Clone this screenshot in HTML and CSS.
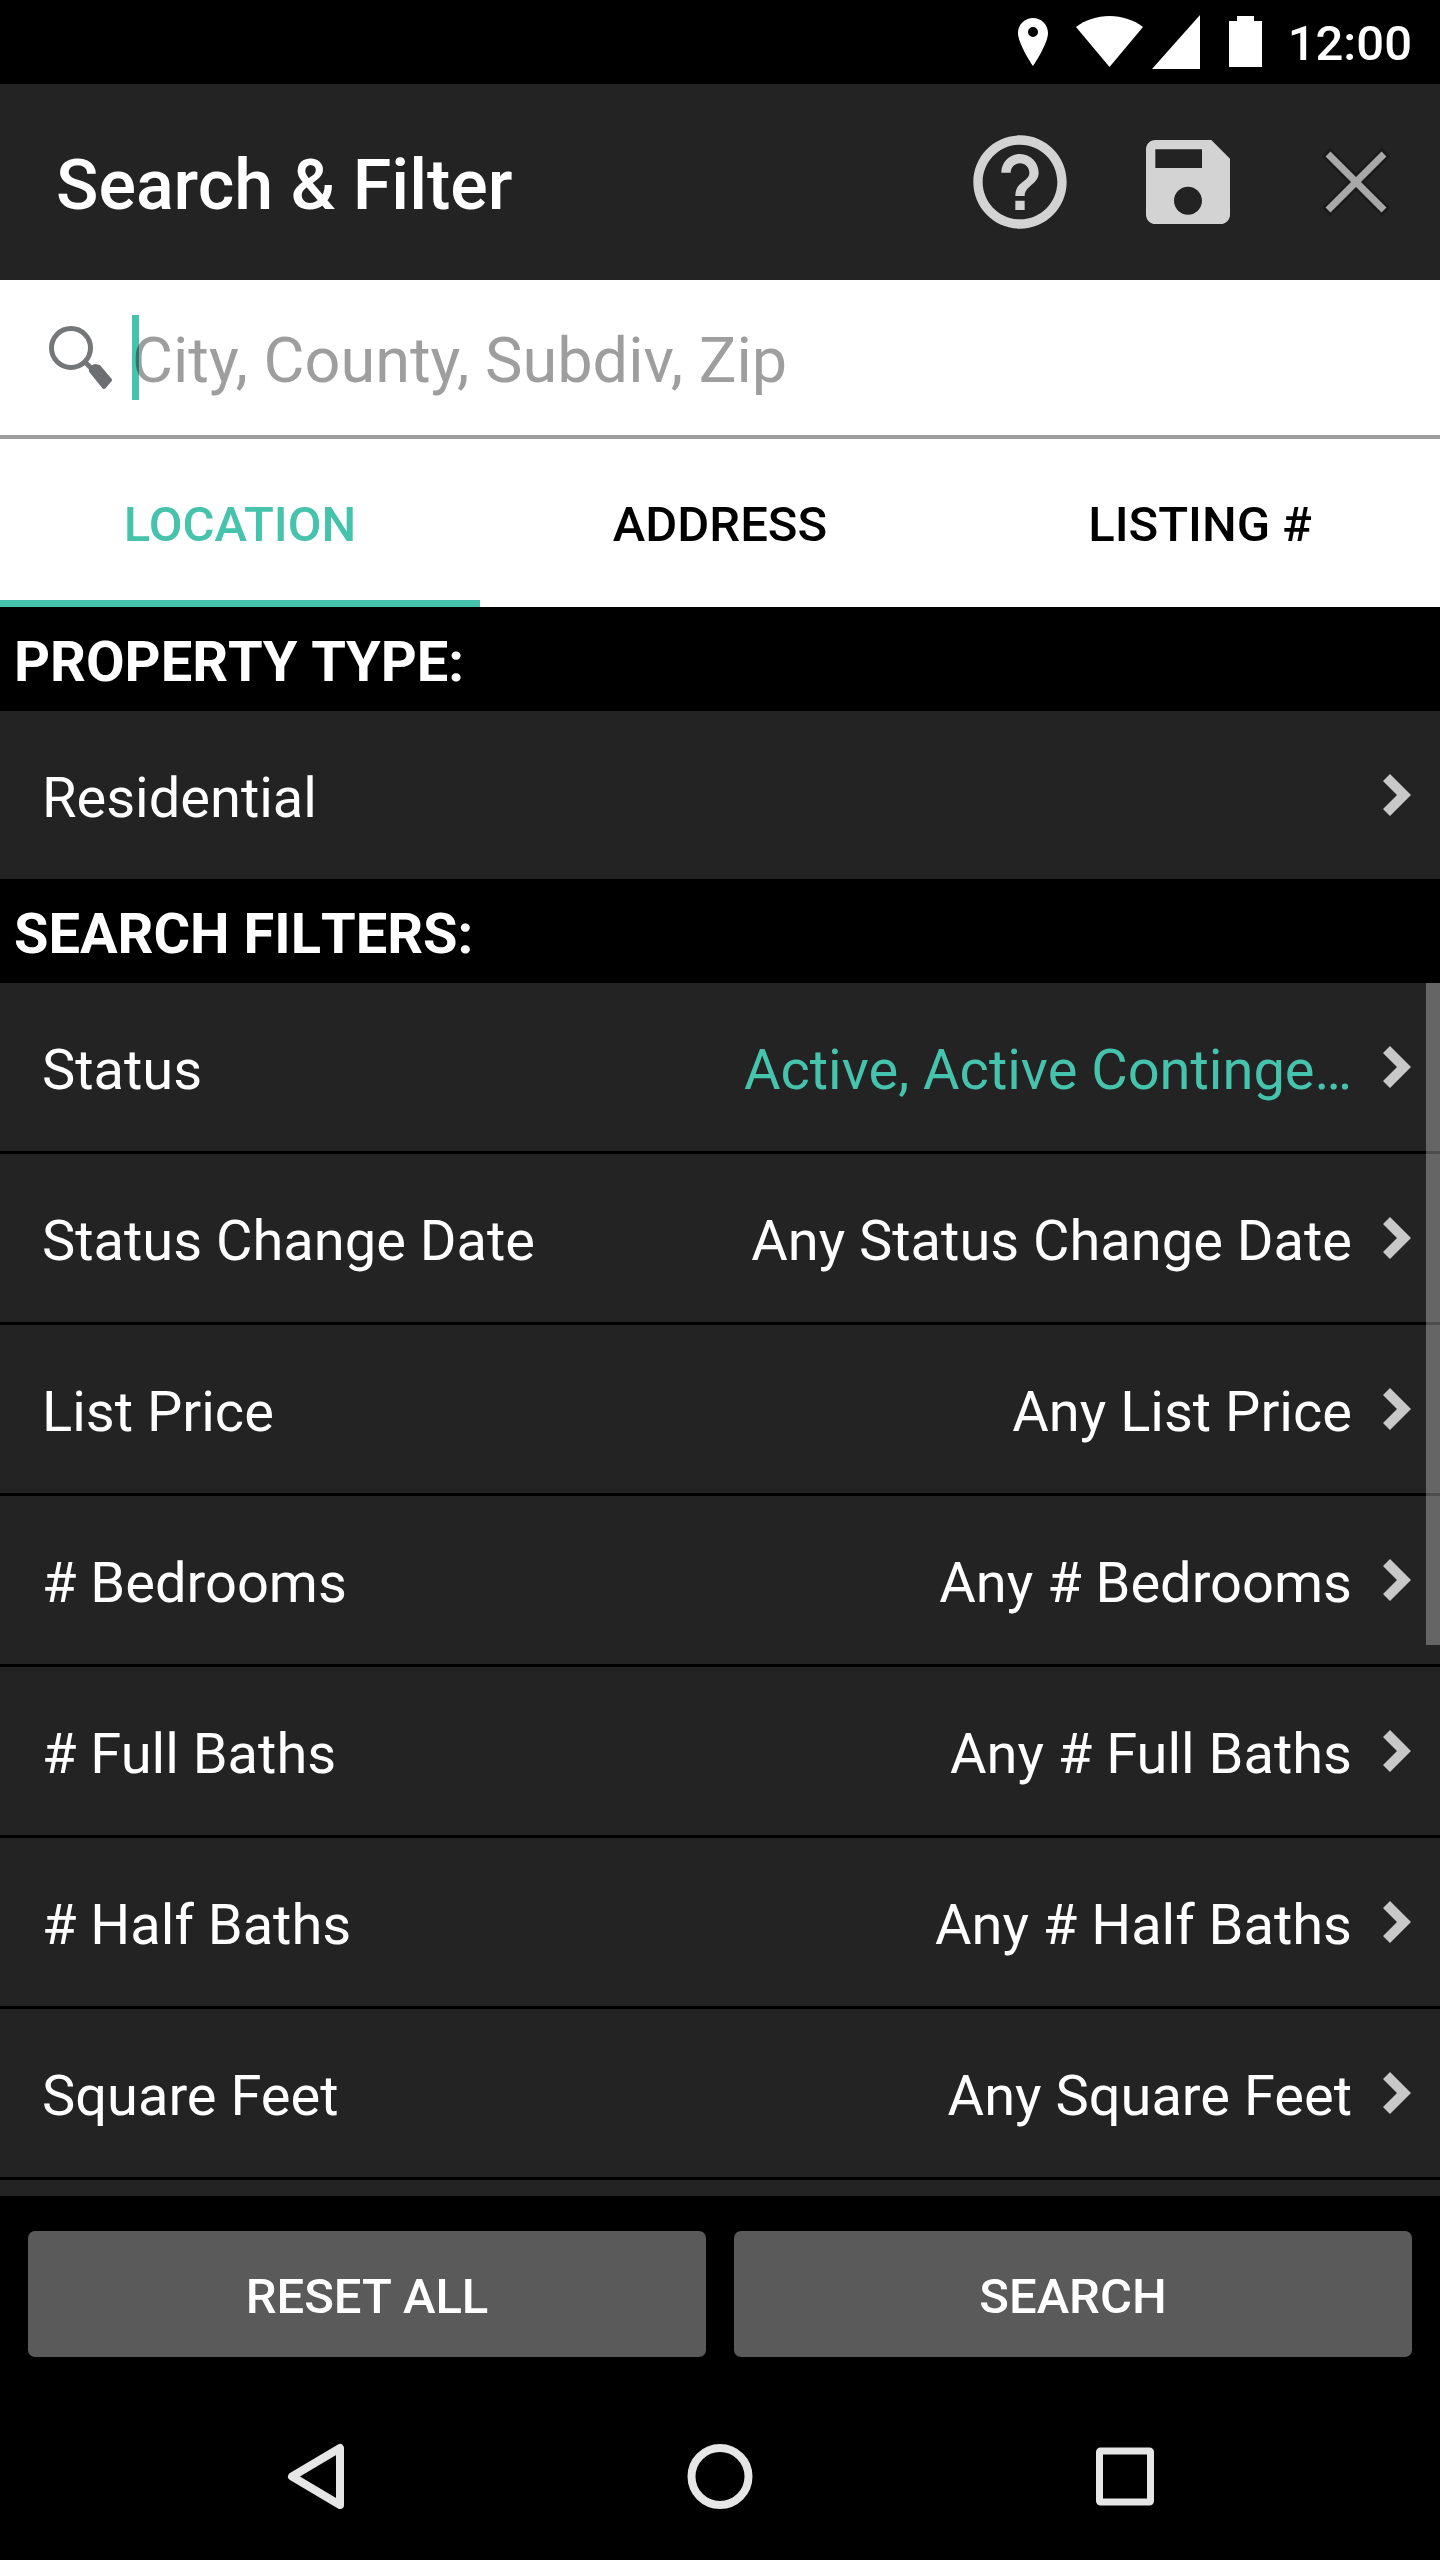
FILE: index.html
```html
<!DOCTYPE html>
<html lang="en">
<head>
<meta charset="utf-8">
<meta name="viewport" content="width=device-width, initial-scale=1">
<title>Search &amp; Filter</title>
<link rel="stylesheet" href="styles.css">
</head>
<body>
<svg class="sprite" aria-hidden="true">
  <symbol id="chevron" viewBox="0 0 28 42"><path d="M0 7L7 0L28 21L7 42L0 35L14 21Z" fill="#c8c8c8"/></symbol>
</svg>
<div class="screen">
  <div class="status-bar">
    <svg width="30" height="48" viewBox="0 0 30 48"><path fill="#fff" fill-rule="evenodd" d="M15 0C6.700 0 0 6.700 0 15C0 26 15 48 15 48S30 26 30 15C30 6.700 23.300 0 15 0ZM15 9a5 5 0 1 1 0 10a5 5 0 0 1 0-10Z"/></svg>
    <svg class="wifi" width="67" height="54" viewBox="0 0 67 54"><path fill="#fff" d="M33.500 52L67 12C58 5 46 1 33.500 1S9 5 0 12Z"/></svg>
    <svg class="signal" width="48" height="54" viewBox="0 0 48 54"><path fill="#fff" d="M48 0V54H0Z"/></svg>
    <svg class="battery" width="33" height="52" viewBox="0 0 33 52"><path fill="#fff" d="M8 0h17v5h8v46H0V5h8Z"/></svg>
    <time class="clock">12:00</time>
  </div>

  <header class="app-bar">
    <h1 class="title">Search &amp; Filter</h1>
    <button class="action" type="button" aria-label="Help">
      <svg width="112" height="112" viewBox="0 0 24 24"><path fill="#d3d3d3" d="M11 18h2v-2h-2v2zm1-16C6.480 2 2 6.480 2 12s4.480 10 10 10 10-4.480 10-10S17.520 2 12 2zm0 18c-4.410 0-8-3.590-8-8s3.590-8 8-8 8 3.590 8 8-3.590 8-8 8zm0-14c-2.210 0-4 1.790-4 4h2c0-1.100.9-2 2-2s2 .9 2 2c0 2-3 1.750-3 5h2c0-2.250 3-2.500 3-5 0-2.210-1.790-4-4-4z"/></svg>
    </button>
    <button class="action" type="button" aria-label="Save">
      <svg width="112" height="112" viewBox="0 0 24 24"><path fill="#d3d3d3" d="M17 3H5c-1.110 0-2 .9-2 2v14c0 1.100.89 2 2 2h14c1.100 0 2-.9 2-2V7l-4-4zm-5 16c-1.660 0-3-1.340-3-3s1.340-3 3-3 3 1.340 3 3-1.340 3-3 3zm3-10H5V5h10v4z"/></svg>
    </button>
    <button class="action" type="button" aria-label="Close">
      <svg width="112" height="112" viewBox="0 0 112 112"><path d="M26 26L86 86M86 26L26 86" stroke="#1a1a1a" stroke-width="12"/><path d="M28 28L84 84M84 28L28 84" stroke="#a8a8a8" stroke-width="7"/></svg>
    </button>
  </header>

  <form class="search-box" role="search">
    <label class="search-icon" for="query" aria-label="Search">
      <svg width="64" height="64" viewBox="0 0 64 64"><circle cx="23" cy="22" r="19.500" fill="none" stroke="#747678" stroke-width="5"/><path d="M37 36L46 45" stroke="#747678" stroke-width="5"/><path d="M43 45L43 42L47 40L51 41L62 54L56 61Z" fill="#6d6e71" stroke="#6d6e71" stroke-width="4" stroke-linejoin="round"/></svg>
    </label>
    <input class="query" id="query" type="text" placeholder="City, County, Subdiv, Zip">
    <span class="caret"></span>
  </form>

  <nav class="tabs" role="tablist">
    <button class="tab tab-active" type="button" role="tab" aria-selected="true">LOCATION</button>
    <button class="tab" type="button" role="tab" aria-selected="false">ADDRESS</button>
    <button class="tab" type="button" role="tab" aria-selected="false">LISTING #</button>
  </nav>

  <h2 class="section">PROPERTY TYPE:</h2>
  <button class="row" type="button"><span class="name">Residential</span><svg class="chevron" width="28" height="42"><use href="#chevron"/></svg></button>

  <h2 class="section">SEARCH FILTERS:</h2>
  <main class="list">
    <button class="row" type="button"><span class="name">Status</span><span class="value value-set">Active, Active Continge…</span><svg class="chevron" width="28" height="42"><use href="#chevron"/></svg></button>
    <button class="row" type="button"><span class="name">Status Change Date</span><span class="value">Any Status Change Date</span><svg class="chevron" width="28" height="42"><use href="#chevron"/></svg></button>
    <button class="row" type="button"><span class="name">List Price</span><span class="value">Any List Price</span><svg class="chevron" width="28" height="42"><use href="#chevron"/></svg></button>
    <button class="row" type="button"><span class="name"># Bedrooms</span><span class="value">Any # Bedrooms</span><svg class="chevron" width="28" height="42"><use href="#chevron"/></svg></button>
    <button class="row" type="button"><span class="name"># Full Baths</span><span class="value">Any # Full Baths</span><svg class="chevron" width="28" height="42"><use href="#chevron"/></svg></button>
    <button class="row" type="button"><span class="name"># Half Baths</span><span class="value">Any # Half Baths</span><svg class="chevron" width="28" height="42"><use href="#chevron"/></svg></button>
    <button class="row" type="button"><span class="name">Square Feet</span><span class="value">Any Square Feet</span><svg class="chevron" width="28" height="42"><use href="#chevron"/></svg></button>
    <div class="row-peek"></div>
    <div class="scrollbar"></div>
  </main>

  <div class="actions">
    <button class="button" type="button">RESET ALL</button>
    <button class="button" type="button">SEARCH</button>
  </div>

  <nav class="nav-bar">
    <button class="nav-key" type="button" aria-label="Back"><svg width="84" height="84" viewBox="0 0 84 84"><path d="M67 14V71L19 42.500Z" fill="none" stroke="#e6e6e6" stroke-width="8" stroke-linejoin="round"/></svg></button>
    <button class="nav-key" type="button" aria-label="Home"><svg width="84" height="84" viewBox="0 0 84 84"><circle cx="42" cy="42.500" r="28.500" fill="none" stroke="#e6e6e6" stroke-width="8"/></svg></button>
    <button class="nav-key" type="button" aria-label="Recent apps"><svg width="84" height="84" viewBox="0 0 84 84"><rect x="16.500" y="17" width="51" height="51" rx="1" fill="none" stroke="#e6e6e6" stroke-width="7" stroke-linejoin="round"/></svg></button>
  </nav>
</div>
</body>
</html>
```
FILE: styles.css
```css
* { box-sizing: border-box; }

body {
  margin: 0;
  background: #000;
  color: #fff;
  font-family: Roboto, "Liberation Sans", sans-serif;
}

button {
  margin: 0;
  padding: 0;
  border: 0;
  background: none;
  color: inherit;
  font: inherit;
}

svg { display: block; flex: none; }

.sprite { position: absolute; width: 0; height: 0; }

.screen {
  display: flex;
  flex-direction: column;
  min-height: 100vh;
}

.status-bar {
  display: flex;
  align-items: center;
  justify-content: flex-end;
  height: 84px;
  padding-right: 28px;
}
.wifi { margin-left: 28px; }
.signal { margin-left: 9px; }
.battery { margin-left: 29px; }
.clock {
  margin-left: 26px;
  padding-top: 2px;
  font-size: 49px;
  font-weight: 500;
}

.app-bar {
  display: flex;
  align-items: center;
  height: 196px;
  padding-left: 56px;
  background: #232323;
}
.title {
  flex: 1;
  margin: 0;
  padding-top: 6px;
  font-size: 70px;
  font-weight: 500;
}
.action {
  display: flex;
  align-items: center;
  justify-content: center;
  width: 168px;
  height: 196px;
}

.search-box {
  position: relative;
  display: flex;
  align-items: center;
  height: 159px;
  padding-left: 48px;
  border-bottom: 4px solid #9e9e9e;
  background: #fff;
}
.query {
  flex: 1;
  min-width: 0;
  height: 155px;
  margin-left: 20px;
  padding: 6px 0 0;
  border: 0;
  outline: 0;
  background: none;
  color: #000;
  font-family: inherit;
  font-size: 63px;
}
.query::placeholder { color: #9e9e9e; opacity: 1; }
.caret {
  position: absolute;
  top: 35px;
  left: 132px;
  width: 7px;
  height: 85px;
  background: #45c3ac;
  mix-blend-mode: multiply;
}

.tabs {
  display: flex;
  height: 168px;
  background: #fff;
  color: #000;
}
.tab {
  flex: 1;
  padding-top: 10px;
  border-bottom: 7px solid transparent;
  font-size: 49px;
  font-weight: 500;
}
.tab-active { border-color: #45c3ac; color: #45c3ac; }

.section {
  margin: 0;
  padding: 22px 14px 16px;
  font-size: 56px;
  font-weight: 700;
  font-kerning: none;
  line-height: 66px;
}

.row {
  display: flex;
  align-items: center;
  width: 100%;
  height: 168px;
  padding: 0 29px 0 42px;
  background: #232323;
  font-size: 56px;
  text-align: left;
}
.name { flex: 1; padding-top: 6px; white-space: nowrap; }
.value { padding-top: 6px; white-space: nowrap; }
.value-set { color: #45c3ac; }
.chevron { margin-left: 31px; }

.list {
  position: relative;
  flex: 1;
  display: flex;
  flex-direction: column;
  gap: 3px;
}
.row-peek { flex: 1; min-height: 16px; background: #232323; }
.scrollbar {
  position: absolute;
  top: 0;
  right: 0;
  width: 14px;
  height: 662px;
  background: rgba(255, 255, 255, 0.3);
}

.actions {
  display: flex;
  gap: 28px;
  padding: 35px 28px;
}
.button {
  flex: 1;
  height: 126px;
  padding-top: 4px;
  border-radius: 7px;
  background: #5a5a5b;
  font-size: 49px;
  font-weight: 500;
}

.nav-bar {
  display: flex;
  justify-content: center;
  gap: 2px;
  height: 168px;
}
.nav-key {
  display: flex;
  align-items: center;
  justify-content: center;
  width: 28%;
}
```
